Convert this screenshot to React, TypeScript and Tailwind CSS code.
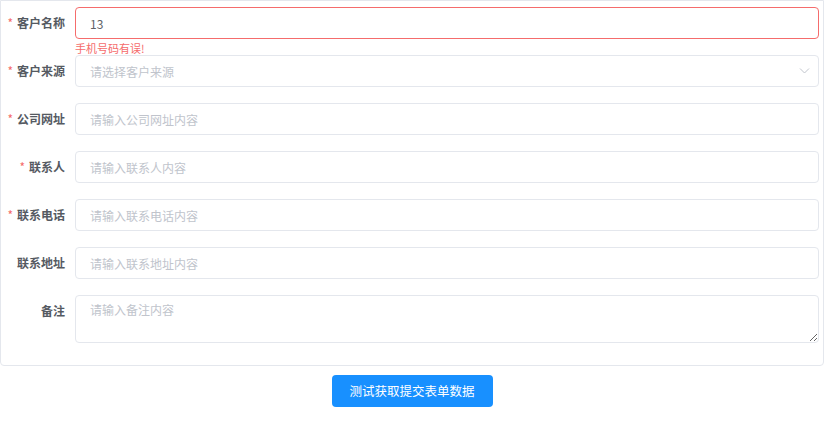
import React, { useState } from "react";

const font = '"Noto Sans CJK SC", "Noto Sans", sans-serif';

type Field = {
  label: string;
  required?: boolean;
  placeholder: string;
  kind?: "input" | "select" | "textarea";
};

const fields: Field[] = [
  { label: "客户来源", required: true, placeholder: "请选择客户来源", kind: "select" },
  { label: "公司网址", required: true, placeholder: "请输入公司网址内容" },
  { label: "联系人", required: true, placeholder: "请输入联系人内容" },
  { label: "联系电话", required: true, placeholder: "请输入联系电话内容" },
  { label: "联系地址", placeholder: "请输入联系地址内容" },
  { label: "备注", placeholder: "请输入备注内容", kind: "textarea" },
];

const Label = ({ text, required }: { text: string; required?: boolean }) => (
  <div className="w-[74px] shrink-0 pr-[10px] h-[32px] flex items-center justify-end text-[12px] font-bold text-[#555a62]">
    {required && <span className="text-[#f56c6c] mr-[4px] text-[12px] font-normal">*</span>}
    {text}
  </div>
);

export default function App() {
  const [name, setName] = useState("13");

  return (
    <div className="w-[824px] bg-white" style={{ fontFamily: font }}>
      <div className="border border-[#e4e7ed] rounded-b-[4px] pt-[6px] pb-[22px] pr-[4px]">
        {/* 客户名称 with error */}
        <div className="flex mb-[16px]">
          <Label text="客户名称" required />
          <div className="relative flex-1">
            <input
              value={name}
              onChange={(e) => setName(e.target.value)}
              className="w-full h-[32px] border border-[#f56c6c] rounded-[4px] px-[14px] text-[12px] text-[#606266] outline-none"
            />
            <div className="absolute left-0 top-full mt-[4px] text-[11px] leading-none text-[#f56c6c]">
              手机号码有误!
            </div>
          </div>
        </div>

        {fields.map((f, i) => (
          <div key={f.label} className={`flex ${i === fields.length - 1 ? "" : "mb-[16px]"}`}>
            <Label text={f.label} required={f.required} />
            <div className="relative flex-1">
              {f.kind === "textarea" ? (
                <textarea
                  placeholder={f.placeholder}
                  className="block w-full h-[48px] border border-[#e4e7ed] rounded-[4px] px-[14px] py-[5px] text-[12px] leading-[18px] text-[#606266] outline-none resize-y placeholder:text-[#c0c4cc]"
                />
              ) : (
                <input
                  placeholder={f.placeholder}
                  readOnly={f.kind === "select"}
                  className="block w-full h-[32px] border border-[#e4e7ed] rounded-[4px] px-[14px] text-[12px] text-[#606266] outline-none placeholder:text-[#c0c4cc]"
                />
              )}
              {f.kind === "select" && (
                <svg
                  className="absolute right-[9px] top-1/2 -translate-y-1/2"
                  width="11"
                  height="7"
                  viewBox="0 0 11 7"
                  fill="none"
                >
                  <path d="M1 1l4.5 4.5L10 1" stroke="#c0c4cc" strokeWidth="1" />
                </svg>
              )}
            </div>
          </div>
        ))}
      </div>

      <div className="flex justify-center pt-[9px]">
        <button className="w-[161px] h-[32px] bg-[#1890ff] text-white text-[12.5px] rounded-[4px]">
          测试获取提交表单数据
        </button>
      </div>
    </div>
  );
}
